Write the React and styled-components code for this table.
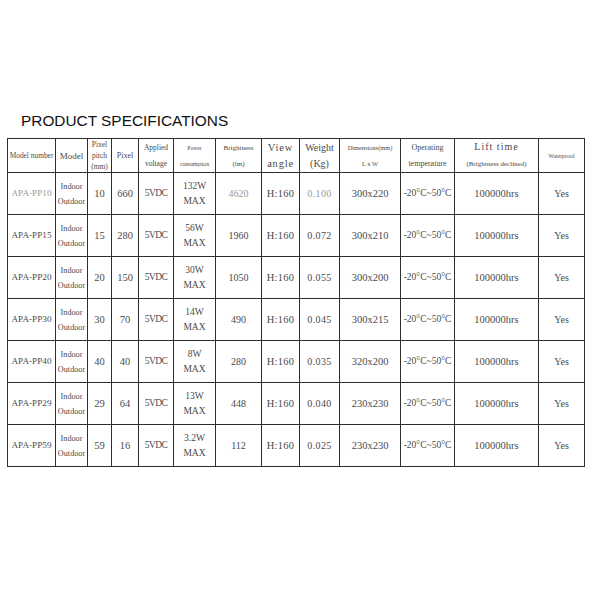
import React from 'react';
import styled, { createGlobalStyle } from 'styled-components';

const GlobalStyle = createGlobalStyle`
    html, body {
        margin: 0;
        padding: 0;
        background: #fff;
    }
    body {
        font-family: "Liberation Serif", serif;
    }
`;

const Page = styled.div`
    width: 600px;
    height: 600px;
    padding: 112px 0 0 7px;
    box-sizing: border-box;
`;

const Title = styled.h1`
    margin: 0 0 9px 14px;
    font-family: "Liberation Sans", Arial, sans-serif;
    font-weight: normal;
    font-size: 15.4px;
    line-height: 17px;
    color: #111;
`;

const Table = styled.table`
    border-collapse: collapse;
    table-layout: fixed;
    width: 577px;
`;

const HeadCell = styled.th`
    border: 1.5px solid #2e2e2e;
    height: 33px;
    padding: 0;
    font-weight: normal;
    color: #4a4a4a;
    text-align: center;
    vertical-align: middle;
    font-size: ${p => p.size || 8}px;
    line-height: ${p => p.lh || 16}px;
    letter-spacing: ${p => p.ls || 0}px;
    white-space: nowrap;
    overflow: hidden;
`;

const Cell = styled.td`
    border: 1.5px solid #2e2e2e;
    height: 41px;
    padding: 0;
    color: ${p => (p.light ? '#999' : '#4a4a4a')};
    text-align: center;
    vertical-align: middle;
    font-size: ${p => p.size || 10}px;
    line-height: ${p => p.lh || 15}px;
    letter-spacing: ${p => p.ls || 0}px;
    white-space: nowrap;
    overflow: hidden;
`;

const LiftTitle = styled.span`
    font-size: 10px;
    letter-spacing: 1px;
`;

const colWidths = [48, 32, 24, 27, 35, 42, 46, 38, 40, 61, 54, 84, 46];

const rows = [
    { model: 'APA-PP10', pitch: '10', pixel: '660', power: '132W', bright: '4620', weight: '0.100', dim: '300x220', light: true },
    { model: 'APA-PP15', pitch: '15', pixel: '280', power: '56W', bright: '1960', weight: '0.072', dim: '300x210' },
    { model: 'APA-PP20', pitch: '20', pixel: '150', power: '30W', bright: '1050', weight: '0.055', dim: '300x200' },
    { model: 'APA-PP30', pitch: '30', pixel: '70', power: '14W', bright: '490', weight: '0.045', dim: '300x215' },
    { model: 'APA-PP40', pitch: '40', pixel: '40', power: '8W', bright: '280', weight: '0.035', dim: '320x200' },
    { model: 'APA-PP29', pitch: '29', pixel: '64', power: '13W', bright: '448', weight: '0.040', dim: '230x230' },
    { model: 'APA-PP59', pitch: '59', pixel: '16', power: '3.2W', bright: '112', weight: '0.025', dim: '230x230' },
];

export default function App() {
    return (
        <Page>
            <GlobalStyle />
            <Title>PRODUCT SPECIFICATIONS</Title>
            <Table>
                <colgroup>
                    {colWidths.map((w, i) => (
                        <col key={i} style={{ width: w }} />
                    ))}
                </colgroup>
                <thead>
                    <tr>
                        <HeadCell size={7.4}>Model number</HeadCell>
                        <HeadCell size={9}>Model</HeadCell>
                        <HeadCell size={7.5} lh={11}>
                            Pixel<br />pitch<br />(mm)
                        </HeadCell>
                        <HeadCell size={8}>Pixel</HeadCell>
                        <HeadCell size={7.5}>
                            Applied<br />voltage
                        </HeadCell>
                        <HeadCell size={5.6}>
                            Power<br />consumption
                        </HeadCell>
                        <HeadCell size={7}>
                            Brightness<br />(lm)
                        </HeadCell>
                        <HeadCell size={10.5} ls={0.8}>
                            View<br />angle
                        </HeadCell>
                        <HeadCell size={10}>
                            Weight<br />(Kg)
                        </HeadCell>
                        <HeadCell size={6.4}>
                            Dimensions(mm)<br />L x W
                        </HeadCell>
                        <HeadCell size={8}>
                            Operating<br />temperature
                        </HeadCell>
                        <HeadCell size={7}>
                            <LiftTitle>Lift time</LiftTitle>
                            <br />(Brightness declined)
                        </HeadCell>
                        <HeadCell size={5.8}>Waterproof</HeadCell>
                    </tr>
                </thead>
                <tbody>
                    {rows.map(r => (
                        <tr key={r.model}>
                            <Cell size={9.2} light={r.light}>{r.model}</Cell>
                            <Cell size={8.2}>
                                Indoor<br />Outdoor
                            </Cell>
                            <Cell size={10.5}>{r.pitch}</Cell>
                            <Cell size={10.5}>{r.pixel}</Cell>
                            <Cell size={9.5} ls={-0.6}>5VDC</Cell>
                            <Cell size={9.5}>
                                {r.power}<br />MAX
                            </Cell>
                            <Cell size={10} light={r.light}>{r.bright}</Cell>
                            <Cell size={10.5} ls={0.3}>H:160</Cell>
                            <Cell size={10} ls={0.4} light={r.light}>{r.weight}</Cell>
                            <Cell size={10.5}>{r.dim}</Cell>
                            <Cell size={9.5}>-20°C~50°C</Cell>
                            <Cell size={10.5}>100000hrs</Cell>
                            <Cell size={10}>Yes</Cell>
                        </tr>
                    ))}
                </tbody>
            </Table>
        </Page>
    );
}
